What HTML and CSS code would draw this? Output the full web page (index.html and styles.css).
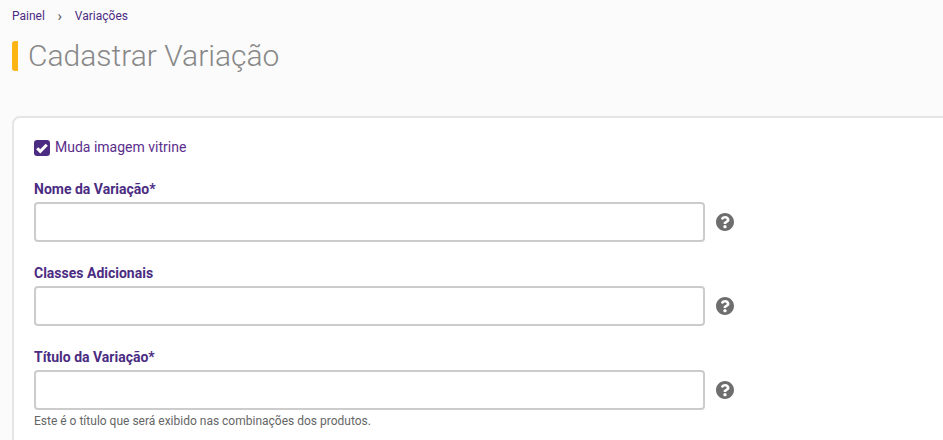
FILE: index.html
```html
<!DOCTYPE html>
<html lang="pt-BR">
<head>
    <meta charset="UTF-8">
    <title>Cadastrar Variação</title>
    <link rel="stylesheet" href="styles.css">
</head>
<body>
    <nav class="breadcrumb">
        <a href="#">Painel</a>
        <span class="breadcrumb-sep">›</span>
        <a href="#">Variações</a>
    </nav>
    <h1 class="page-title">Cadastrar Variação</h1>
    <form class="card">
        <label class="check-row">
            <svg class="check-icon" viewBox="0 0 16 16"><rect width="16" height="16" rx="3.2"/><path class="check-mark" d="M3.2 8.2l3.1 3.1 6.5-6.6"/></svg>
            <span class="check-text">Muda imagem vitrine</span>
        </label>
        <div class="form-group">
            <label for="nome">Nome da Variação*</label>
            <div class="input-row">
                <input type="text" id="nome">
                <svg class="help-icon" viewBox="8 8 496 496"><path d="M504 256c0 136.997-111.043 248-248 248S8 392.997 8 256C8 119.083 119.043 8 256 8s248 111.083 248 248zM262.655 90c-54.497 0-89.255 22.957-116.549 63.758-3.536 5.286-2.353 12.415 2.715 16.258l34.699 26.31c5.205 3.947 12.621 3.008 16.665-2.122 17.864-22.658 30.113-35.797 57.303-35.797 20.429 0 45.698 13.148 45.698 32.958 0 14.976-12.363 22.667-32.534 33.976C247.128 238.528 216 254.941 216 296v4c0 6.627 5.373 12 12 12h56c6.627 0 12-5.373 12-12v-1.333c0-28.462 83.186-29.647 83.186-106.667 0-58.002-60.165-102-116.531-102zM256 338c-25.365 0-46 20.635-46 46 0 25.364 20.635 46 46 46s46-20.636 46-46c0-25.365-20.635-46-46-46z"/></svg>
            </div>
        </div>
        <div class="form-group">
            <label for="classes">Classes Adicionais</label>
            <div class="input-row">
                <input type="text" id="classes">
                <svg class="help-icon" viewBox="8 8 496 496"><path d="M504 256c0 136.997-111.043 248-248 248S8 392.997 8 256C8 119.083 119.043 8 256 8s248 111.083 248 248zM262.655 90c-54.497 0-89.255 22.957-116.549 63.758-3.536 5.286-2.353 12.415 2.715 16.258l34.699 26.31c5.205 3.947 12.621 3.008 16.665-2.122 17.864-22.658 30.113-35.797 57.303-35.797 20.429 0 45.698 13.148 45.698 32.958 0 14.976-12.363 22.667-32.534 33.976C247.128 238.528 216 254.941 216 296v4c0 6.627 5.373 12 12 12h56c6.627 0 12-5.373 12-12v-1.333c0-28.462 83.186-29.647 83.186-106.667 0-58.002-60.165-102-116.531-102zM256 338c-25.365 0-46 20.635-46 46 0 25.364 20.635 46 46 46s46-20.636 46-46c0-25.365-20.635-46-46-46z"/></svg>
            </div>
        </div>
        <div class="form-group">
            <label for="titulo">Título da Variação*</label>
            <div class="input-row">
                <input type="text" id="titulo">
                <svg class="help-icon" viewBox="8 8 496 496"><path d="M504 256c0 136.997-111.043 248-248 248S8 392.997 8 256C8 119.083 119.043 8 256 8s248 111.083 248 248zM262.655 90c-54.497 0-89.255 22.957-116.549 63.758-3.536 5.286-2.353 12.415 2.715 16.258l34.699 26.31c5.205 3.947 12.621 3.008 16.665-2.122 17.864-22.658 30.113-35.797 57.303-35.797 20.429 0 45.698 13.148 45.698 32.958 0 14.976-12.363 22.667-32.534 33.976C247.128 238.528 216 254.941 216 296v4c0 6.627 5.373 12 12 12h56c6.627 0 12-5.373 12-12v-1.333c0-28.462 83.186-29.647 83.186-106.667 0-58.002-60.165-102-116.531-102zM256 338c-25.365 0-46 20.635-46 46 0 25.364 20.635 46 46 46s46-20.636 46-46c0-25.365-20.635-46-46-46z"/></svg>
            </div>
            <p class="hint">Este é o título que será exibido nas combinações dos produtos.</p>
        </div>
    </form>
</body>
</html>
```

FILE: styles.css
```css
html, body {
    height: 100%;
    overflow: hidden;
}
body {
    font-family: Roboto, "Liberation Sans", sans-serif;
    margin: 0;
    padding: 0 0 0 12px;
    background-color: #fbfbfb;
}
.breadcrumb {
    display: flex;
    align-items: center;
    height: 14px;
    padding-top: 9px;
    font-size: 12px;
    font-weight: 400;
}
.breadcrumb a {
    color: #4b2c82;
    text-decoration: none;
}
.breadcrumb-sep {
    width: 30px;
    text-align: center;
    color: #555;
    font-size: 15px;
}
.page-title {
    margin: 18px 0 45px;
    padding-left: 10px;
    height: 30px;
    line-height: 30px;
    border-left: 6px solid #fdb515;
    border-radius: 3px;
    font-size: 30px;
    font-weight: 300;
    color: #888;
}
.card {
    width: calc(100% + 20px);
    box-sizing: border-box;
    padding: 22px 20px 40px;
    background-color: #fff;
    border: 2px solid #e5e5e5;
    border-radius: 8px;
}
.check-row {
    display: flex;
    align-items: center;
    gap: 5px;
    height: 16px;
    margin-bottom: 25px;
    font-size: 14px;
    color: #5b2d8c;
}
.check-text {
    padding-bottom: 2px;
}
.check-icon {
    width: 16px;
    height: 16px;
    fill: #4b2c82;
}
.check-mark {
    fill: none;
    stroke: #fff;
    stroke-width: 3;
}
.form-group {
    margin-bottom: 23px;
}
.form-group label {
    display: block;
    height: 16px;
    line-height: 16px;
    margin-bottom: 5px;
    font-size: 14px;
    font-weight: 700;
    color: #4b2c82;
}
.input-row {
    display: flex;
    align-items: center;
    gap: 11px;
}
.input-row input {
    width: 671px;
    height: 40px;
    box-sizing: border-box;
    border: 2px solid #ccc;
    border-radius: 4px;
    background-color: #fff;
}
.help-icon {
    width: 18px;
    height: 18px;
    fill: #6e6e6e;
}
.hint {
    margin: 4px 0 0;
    font-size: 12px;
    color: #666;
}
```
